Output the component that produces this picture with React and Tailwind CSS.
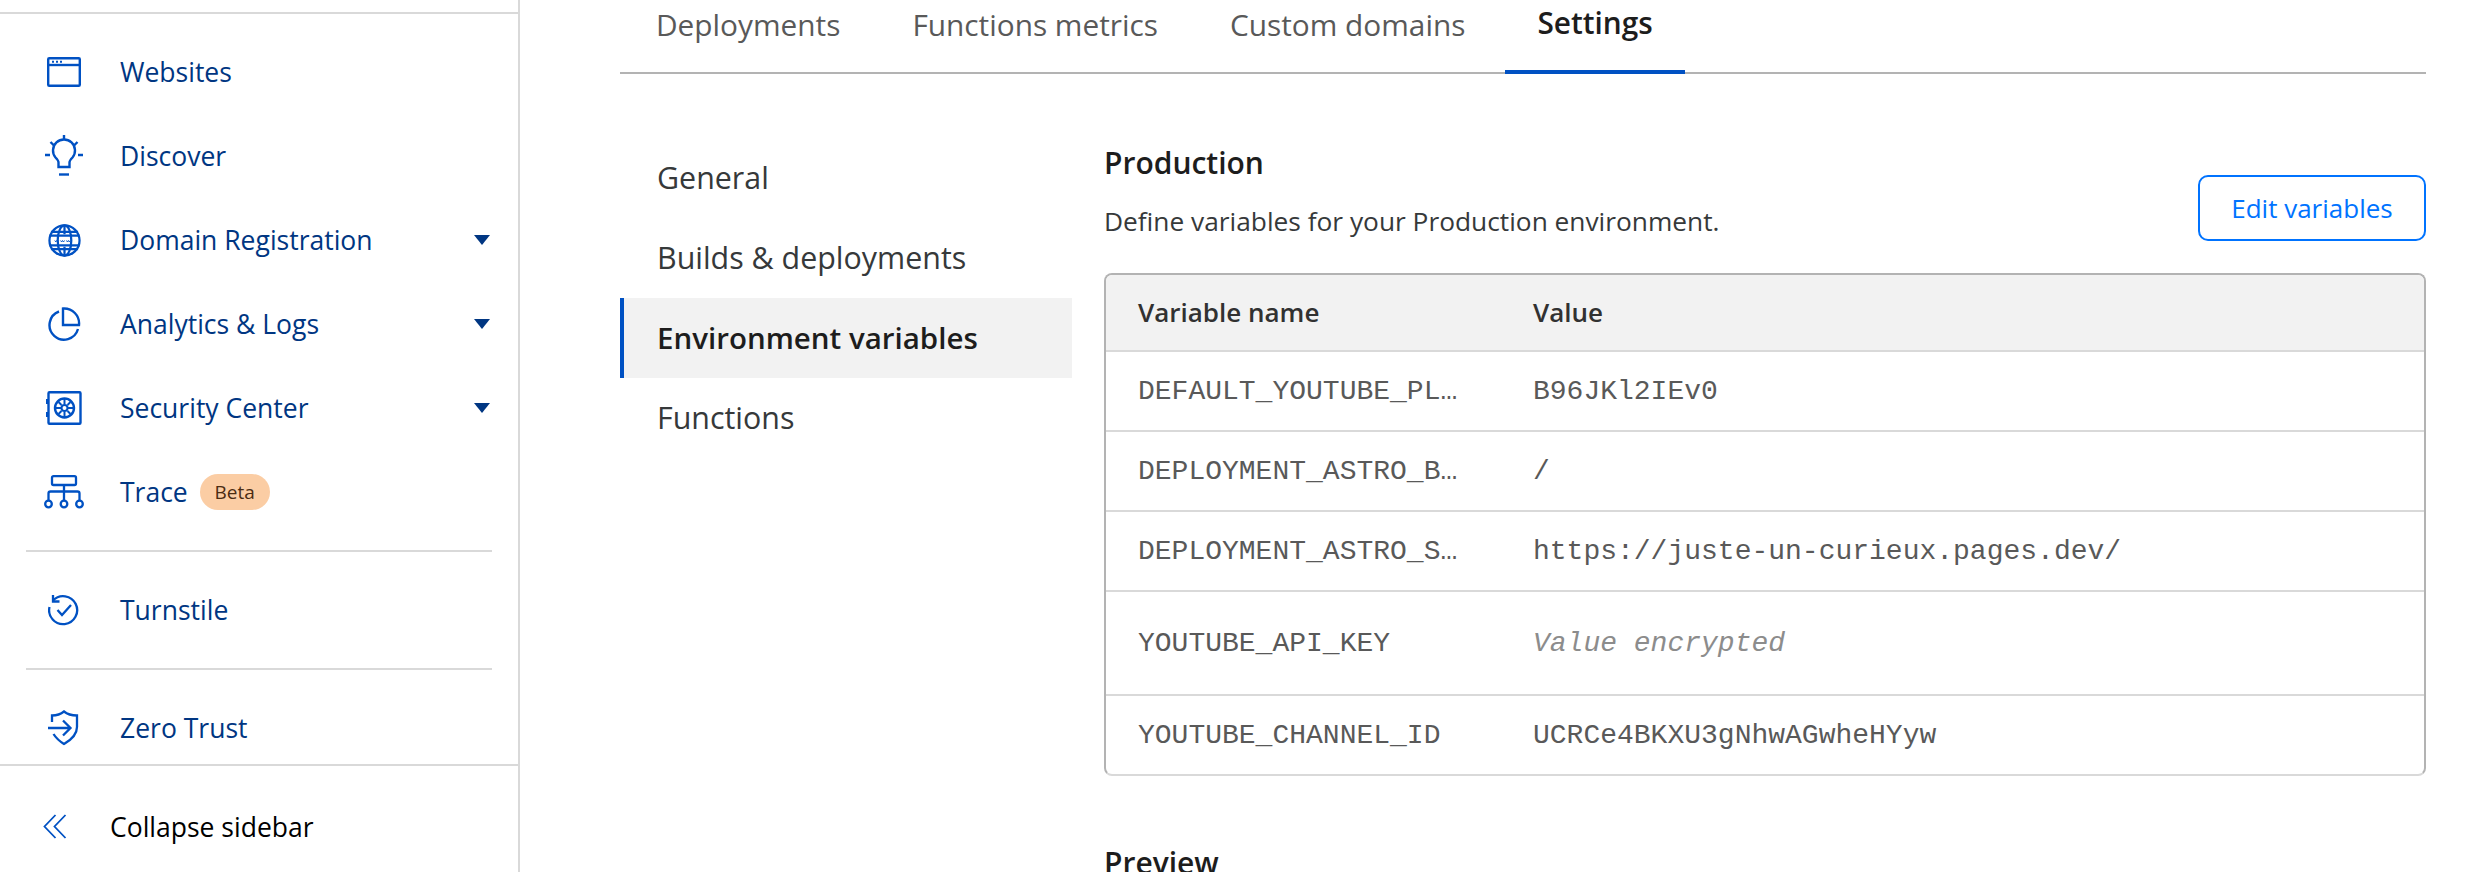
const iconBlue = "#0051c3";

function WebsitesIcon() {
  return (
    <svg width="34" height="30" viewBox="0 0 34 30" fill="none" stroke={iconBlue} strokeWidth="2.4">
      <rect x="1.2" y="1.2" width="31.6" height="27.6" rx="1" />
      <path d="M1.2 8h31.6" />
      <path d="M5 4.700h2M9 4.700h2M13 4.700h2" strokeWidth="2" />
    </svg>
  );
}

function BulbIcon() {
  return (
    <svg width="40" height="42" viewBox="0 0 40 42" fill="none" stroke={iconBlue} strokeWidth="2.400">
      <path d="M14.500 32v-4.500c0-2-1-3-3-5a11 11 0 1 1 17 0c-2 2-3 3-3 5V32z" />
      <path d="M15 39.500h10" strokeWidth="2.400" />
      <path d="M20 0v5M1 20h5M34 20h5M6.500 7l3.500 3.500M33.500 7L30 10.500" />
    </svg>
  );
}

function GlobeIcon() {
  return (
    <svg width="33" height="33" viewBox="0 0 34 34" fill="none" stroke={iconBlue} strokeWidth="2.300">
      <circle cx="17" cy="17" r="15.500" />
      <ellipse cx="17" cy="17" rx="7" ry="15.500" />
      <path d="M17 1.500v9M17 23.500v9M3 8h28M3 26h28" />
      <path d="M1.500 12h31M1.500 22h31" />
      <path d="M7 17l1 1.500 1-1.500 1 1.500 1-1.500M13 17l1 1.500 1-1.500 1 1.500 1-1.500M19 17l1 1.500 1-1.500 1 1.500 1-1.500" strokeWidth="1" />
    </svg>
  );
}

function PieIcon() {
  return (
    <svg width="34" height="34" viewBox="0 0 34 34" fill="none" stroke={iconBlue} strokeWidth="2.400">
      <path d="M12 4.500A14.500 14.500 0 1 0 31 22" />
      <path d="M16 1.500a15 15 0 0 1 16 16.500H16z" />
    </svg>
  );
}

function SafeIcon() {
  return (
    <svg width="36" height="34" viewBox="0 0 36 34" fill="none" stroke={iconBlue} strokeWidth="2.400">
      <rect x="2.500" y="1.200" width="32" height="31.600" rx="1" />
      <path d="M1 8v5M1 21v5" />
      <circle cx="18.500" cy="17" r="9.500" />
      <circle cx="18.500" cy="17" r="3" strokeWidth="2" />
      <path d="M18.500 8v5M18.500 21v5M10 17h5M22 17h5M12.500 11l3 3M24.500 11l-3 3M12.500 23l3-3M24.500 23l-3-3" strokeWidth="2" />
    </svg>
  );
}

function TraceIcon() {
  return (
    <svg width="40" height="34" viewBox="0 0 40 34" fill="none" stroke={iconBlue} strokeWidth="2.300">
      <rect x="8" y="1.200" width="24" height="8.800" rx="1.500" />
      <path d="M20 10v15M4.500 25v-6.500a2 2 0 0 1 2-2h27a2 2 0 0 1 2 2V25" />
      <circle cx="4.500" cy="29" r="3.300" />
      <circle cx="20" cy="29" r="3.300" />
      <circle cx="35.500" cy="29" r="3.300" />
    </svg>
  );
}

function TurnstileIcon() {
  return (
    <svg width="32" height="32" viewBox="0 0 32 32" fill="none" stroke={iconBlue} strokeWidth="2.300">
      <path d="M5 6.500A14 14 0 1 1 1.500 13" />
      <path d="M5 1v6.500h6.500" />
      <path d="M9.500 16l4.500 5 9-10" />
    </svg>
  );
}

function ShieldIcon() {
  return (
    <svg width="32" height="36" viewBox="0 0 32 36" fill="none" stroke={iconBlue} strokeWidth="2.300">
      <path d="M4 12V5.500c5 0 9-1.500 12-4 3 2.500 7 4 13 4V17c0 7-6 13-13 17-4-2.500-8-6-10.500-10" />
      <path d="M0 18h22M15 10.500l7.500 7.500-7.500 7.500" />
    </svg>
  );
}

function CollapseIcon() {
  return (
    <svg width="24" height="26" viewBox="0 0 24 26" fill="none" stroke={iconBlue} strokeWidth="1.800">
      <path d="M12.500 1L1.500 12.500 12.500 24M22.500 1L11.500 12.500 22.500 24" />
    </svg>
  );
}

function Caret() {
  return (
    <svg width="16" height="10" viewBox="0 0 16 10" fill="#003682">
      <path d="M0 0h16L8 10z" />
    </svg>
  );
}

function NavRow({icon, label, caret, badge}) {
  return (
    <div className="h-[84px] shrink-0 flex items-center">
      <div className="w-[120px] pl-2 flex justify-center shrink-0">{icon}</div>
      <span className="text-[#003682] text-[26.5px] leading-none">{label}</span>
      {badge && (
        <span className="ml-3 h-9 w-[70px] flex items-center justify-center rounded-full bg-[#fbcda4] text-[#4b2c12] text-[19px]">{badge}</span>
      )}
      {caret && <div className="ml-auto mr-[28px]"><Caret /></div>}
    </div>
  );
}

function Sidebar() {
  return (
    <aside className="w-[520px] shrink-0 h-[872px] flex flex-col border-r-2 border-[#d9d9d9] pt-3">
      <div className="h-[752px] border-t-2 border-[#d9d9d9] overflow-hidden pt-4 shrink-0">
        <NavRow icon={<WebsitesIcon />} label="Websites" />
        <NavRow icon={<BulbIcon />} label="Discover" />
        <NavRow icon={<GlobeIcon />} label="Domain Registration" caret />
        <NavRow icon={<PieIcon />} label="Analytics & Logs" caret />
        <NavRow icon={<SafeIcon />} label="Security Center" caret />
        <NavRow icon={<TraceIcon />} label="Trace" badge="Beta" />
        <hr className="mx-[26px] my-4 border-t-2 border-[#d9d9d9]" />
        <NavRow icon={<TurnstileIcon />} label="Turnstile" />
        <hr className="mx-[26px] my-4 border-t-2 border-[#d9d9d9]" />
        <NavRow icon={<ShieldIcon />} label="Zero Trust" />
      </div>
      <div className="flex-1 border-t-2 border-[#d9d9d9] flex items-center pt-4">
        <div className="w-[110px] pl-[43px] shrink-0"><CollapseIcon /></div>
        <span className="text-black text-[26.5px] leading-none">Collapse sidebar</span>
      </div>
    </aside>
  );
}

function Tabs() {
  const tabs = ["Deployments", "Functions metrics", "Custom domains", "Settings"];
  return (
    <div className="h-[74px] flex gap-2 pl-1 border-b-2 border-[#b3b3b3]">
      {tabs.map((t) => (
        <div
          key={t}
          className={
            t === "Settings"
              ? "h-[74px] px-8 pb-6 flex items-center border-b-4 border-[#0051c3] text-[#1d1d1d] font-semibold text-[29.8px]"
              : "h-[74px] px-8 pb-6 flex items-center text-[#595959] text-[29.8px]"
          }
        >
          {t}
        </div>
      ))}
    </div>
  );
}

function SideNav() {
  const items = ["General", "Builds & deployments", "Environment variables", "Functions"];
  return (
    <div className="w-[452px] shrink-0 pt-16">
      {items.map((t) => (
        <div
          key={t}
          className={
            t === "Environment variables"
              ? "h-20 pl-[33px] flex items-center border-l-4 border-[#0051c3] bg-[#f2f2f2] text-[#1d1d1d] font-semibold text-[29.5px]"
              : "h-20 pl-[37px] flex items-center text-[#36393a] text-[30.4px]"
          }
        >
          {t}
        </div>
      ))}
    </div>
  );
}

const rows = [
  ["DEFAULT_YOUTUBE_PL…", "B96JKl2IEv0", "h-20"],
  ["DEPLOYMENT_ASTRO_B…", "/", "h-20"],
  ["DEPLOYMENT_ASTRO_S…", "https://juste-un-curieux.pages.dev/", "h-20"],
  ["YOUTUBE_API_KEY", "Value encrypted", "h-[104px]"],
  ["YOUTUBE_CHANNEL_ID", "UCRCe4BKXU3gNhwAGwheHYyw", "h-20"],
];

function VarsTable() {
  return (
    <div className="mt-8 rounded-lg border-2 border-[#b3b3b3] border-b-[#d9d9d9] overflow-hidden">
      <div className="h-[75px] flex items-center bg-[#f2f2f2] font-semibold text-[#313131] text-[26px]">
        <div className="w-[427px] pl-8">Variable name</div>
        <div>Value</div>
      </div>
      {rows.map(([name, value, h]) => (
        <div key={name} className={`${h} pt-0.5 flex items-center border-t-2 border-[#d9d9d9] text-[28px] font-['Liberation_Mono',monospace]`}>
          <div className="w-[427px] pl-8 text-[#595959]">{name}</div>
          {value === "Value encrypted"
            ? <div className="italic text-[#8c8c8c]">{value}</div>
            : <div className="text-[#595959]">{value}</div>}
        </div>
      ))}
    </div>
  );
}

function Production() {
  return (
    <div className="flex-1 min-w-0 pt-[66px] pl-8">
      <div className="flex items-end justify-between">
        <div>
          <h2 className="text-[#1d1d1d] font-semibold text-[30px] leading-[46px]">Production</h2>
          <p className="mt-[15px] text-[#36393a] text-[26.3px] leading-10">Define variables for your Production environment.</p>
        </div>
        <button className="w-[228px] h-[66px] rounded-[10px] border-2 border-[#0073ff] text-[#0073ff] text-[26px]">Edit variables</button>
      </div>
      <VarsTable />
      <h2 className="mt-[64px] text-[#1d1d1d] font-semibold text-[30px] leading-[46px]">Preview</h2>
    </div>
  );
}

export default function App() {
  return (
    <div className="w-[2478px] h-[872px] overflow-hidden bg-white flex font-['Open_Sans',sans-serif]">
      <Sidebar />
      <main className="w-[1806px] ml-[100px] shrink-0">
        <Tabs />
        <div className="flex">
          <SideNav />
          <Production />
        </div>
      </main>
    </div>
  );
}
